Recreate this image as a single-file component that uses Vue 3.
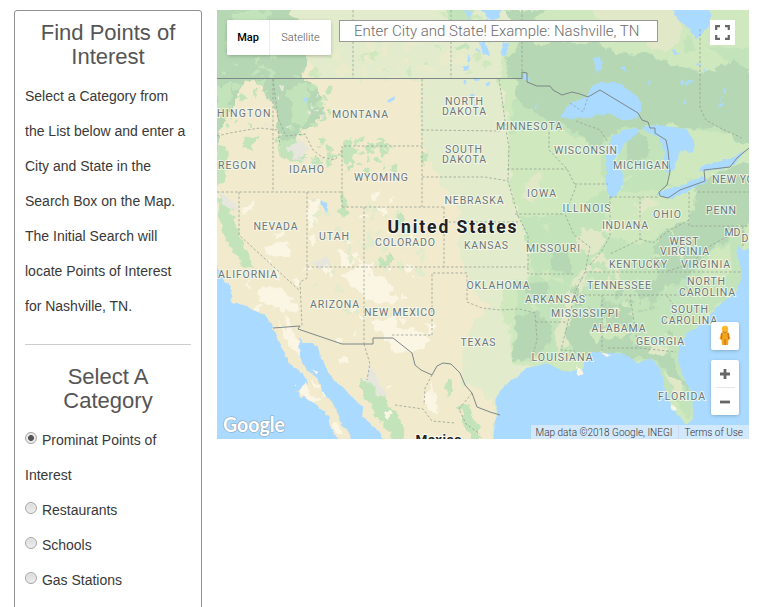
<script setup>
import { ref } from 'vue'

const selected = ref(0)
const categories = ['Prominat Points of Interest', 'Restaurants', 'Schools', 'Gas Stations']

// [label, centre x, baseline y, width]
const labels = [
  ['MONTANA', 360, 118, 55], ['NORTH', 464, 104.5, 37], ['DAKOTA', 464, 115, 43],
  ['MINNESOTA', 529, 130, 65], ['SOUTH', 463.5, 153, 36], ['DAKOTA', 464, 163, 43],
  ['WISCONSIN', 585.5, 153.5, 62], ['MICHIGAN', 641, 169, 55], ['IDAHO', 306.5, 173, 34],
  ['WYOMING', 381, 181, 53], ['NEBRASKA', 474, 204, 58], ['IOWA', 541.5, 197, 28],
  ['ILLINOIS', 586.5, 212, 47], ['OHIO', 667, 218, 27], ['PENN', 721, 214, 29],
  ['NEVADA', 275.5, 230, 43], ['UTAH', 334, 240, 29], ['COLORADO', 405, 246, 59],
  ['KANSAS', 486, 249, 43], ['MISSOURI', 553, 252, 53], ['INDIANA', 625, 229, 45],
  ['WEST', 684, 245, 28], ['VIRGINIA', 684.5, 255, 48], ['KENTUCKY', 638, 268, 57],
  ['VIRGINIA', 705.5, 268, 48], ['TENNESSEE', 619, 289, 63], ['NORTH', 706, 285, 37],
  ['CAROLINA', 707, 295.5, 55], ['OKLAHOMA', 498, 289, 62], ['ARIZONA', 334.5, 308, 48],
  ['NEW MEXICO', 399.5, 316, 70], ['ARKANSAS', 555, 303, 59], ['MISSISSIPPI', 584.5, 317, 66],
  ['ALABAMA', 618.5, 332, 53], ['SOUTH', 689.5, 313, 36], ['CAROLINA', 689, 323.5, 55],
  ['GEORGIA', 660, 345, 47], ['TEXAS', 478, 346, 34], ['LOUISIANA', 562, 361, 60],
  ['FLORIDA', 681.5, 400, 46], ['MD', 732.5, 236, 15]
]

const states = [
  'M217 136L230 133L247 130L260 128L278 130L280 145',
  'M273 79V192', 'M217 192H342', 'M342 207V146H422', 'M422 79V207', 'M342 207H444',
  'M273 79L278 118L286 136L305 134L313 150L322 157L335 160L342 150',
  'M239 192V235L300 291', 'M307 192V278L300 282L302 326', 'M307 267H528', 'M364 207V344',
  'M444 207V267', 'M444 222H518', 'M422 130L500 131', 'M499 79L503 105L506 130L509 147L508 181',
  'M422 177H485L508 181L518 216', 'M507 169H567', 'M515 214H564', 'M518 216L528 235V274H575',
  'M432 335V273H467V302L482 308L500 310L519 309L535 313L537 340L531 362', 'M392 335H432',
  'M536 322H568', 'M549 132V150L567 169L576 187L565 214L574 235L590 247L585 272L576 290L568 322L561 350L575 351',
  'M575 184H608', 'M610 197V236L601 252L589 266', 'M610 197H659', 'M640 197V239L627 246L610 254',
  'M689 192V226H749', 'M698 192H749', 'M640 239L653 243L667 232L689 220', 'M585 272H742',
  'M575 295H690', 'M602 295V350', 'M630 295L638 348', 'M608 348H640L676 352', 'M667 296L684 320',
  'M668 271L690 264L710 246L730 235', 'M743 226V246', 'M353 10V78', 'M451 10V78', 'M522 10V72',
  'M700 29V108L706 120L718 127L742 138', 'M576 121L600 130L608 142', 'M570 103L583 112L588 97',
  'M364 344L370 364L367 380', 'M432 375L425 388L424 405', 'M395 405L423 409L432 421L455 423',
  'M472 393L459 409L466 424L480 434'
]

// deterministic scatter of small terrain patches
function scatter(seed, count, x0, y0, w, h, max) {
  let s = seed
  const next = () => (s = (s * 16807) % 2147483647) / 2147483647
  return Array.from({ length: count }, () => {
    const x = x0 + next() * w
    const y = y0 + next() * h
    const a = 2 + next() * max
    const b = 2 + next() * max
    return `M${x.toFixed(1)} ${y.toFixed(1)}l${a.toFixed(1)} ${(-b / 2).toFixed(1)}l${(a / 2).toFixed(1)} ${b.toFixed(1)}l${(-a).toFixed(1)} ${(b / 2).toFixed(1)}z`
  }).join('')
}
const patches = [
  { d: scatter(31, 36, 240, 200, 180, 130, 6), c: 'sand' },
  { d: scatter(77, 20, 290, 320, 140, 110, 7), c: 'sand' },
  { d: scatter(19, 34, 290, 85, 40, 80, 5), c: 'leaf' },
  { d: scatter(53, 22, 368, 205, 55, 70, 5), c: 'plain' },
  { d: scatter(59, 22, 310, 195, 60, 120, 5), c: 'plain' },
  { d: scatter(37, 26, 345, 135, 45, 35, 4), c: 'leaf' },
  { d: scatter(91, 22, 310, 14, 200, 60, 6), c: 'soft' },
  { d: scatter(11, 20, 310, 40, 150, 35, 10), c: 'pale' },
  { d: scatter(47, 34, 570, 275, 125, 75, 8), c: 'forest' },
  { d: scatter(67, 38, 530, 150, 150, 190, 7), c: 'soft' },
  { d: scatter(83, 12, 575, 230, 40, 50, 7), c: 'tan' },
  { d: scatter(5, 12, 460, 15, 65, 100, 2), c: 'water' },
  { d: scatter(7, 12, 535, 50, 200, 60, 2), c: 'water' },
  { d: scatter(29, 30, 218, 40, 80, 90, 4), c: 'leaf' },
  { d: scatter(43, 9, 265, 85, 55, 60, 2), c: 'urban' }
]
</script>

<template>
  <main class="page">
    <aside class="panel">
      <h2>Find Points of Interest</h2>
      <p>Select a Category from the List below and enter a City and State in the Search Box on the Map. The Initial Search will locate Points of Interest for Nashville, TN.</p>
      <hr />
      <h2>Select A Category</h2>
      <label v-for="(name, i) in categories" :key="name" @click="selected = i">
        <span class="radio" :class="{ on: selected === i }"></span> {{ name }}
      </label>
    </aside>

    <section class="map">
      <svg class="canvas" width="532" height="429" viewBox="217 10 532 429">
        <defs>
          <filter id="rough" x="-2%" y="-2%" width="104%" height="104%" color-interpolation-filters="sRGB">
            <feTurbulence type="fractalNoise" baseFrequency="0.1" numOctaves="3" seed="4" />
            <feDisplacementMap in="SourceGraphic" scale="12" xChannelSelector="R" yChannelSelector="G" />
          </filter>
          <filter id="coast" x="-2%" y="-2%" width="104%" height="104%" color-interpolation-filters="sRGB">
            <feTurbulence type="fractalNoise" baseFrequency="0.18" numOctaves="2" seed="8" />
            <feDisplacementMap in="SourceGraphic" scale="4" xChannelSelector="R" yChannelSelector="G" />
          </filter>
        </defs>
        <rect class="base" x="217" y="10" width="532" height="429" />
        <g filter="url(#rough)">
          <path class="plain" d="M290 0H770V460H490L497 412L482 388L462 385L464 350L474 320L490 306L474 293L462 262L456 220L462 200L440 184L428 160L420 135L421 79H318L306 55z" />
          <path class="soft" d="M499 78L507 120L509 165L512 200L518 214L528 240L528 275L505 290L500 308L510 330L512 363L540 370L600 380L700 440L770 300V0H522V30L508 40z" />
          <path class="leaf" d="M509 135L545 125L600 145L606 190L565 215L520 215L535 275L515 285L516 360H640L690 420L696 390L680 345L745 280V225L690 220L640 245L608 235L608 197L660 190L690 180V150L675 140L655 125L700 130L760 140V100H512zM445 5L473 8L474 29L456 26L446 18zM455 44L470 47L464 51L457 50z" />
          <path class="tan" d="M590 5H680L684 30L675 50L655 50L645 40L612 40zM524 184L532 178L541 174L540 188L530 202L522 196zM576 236L592 228L605 234L603 246L590 258L580 249zM634 204L645 198L658 200L645 212L632 217zM574 278L588 264L584 286L572 305L566 346L557 352L556 335z" />
          <path class="soft" d="M680 5H770V80L745 60L720 70L698 73L688 58z" />
          <path class="leaf" d="M685 45L690 36L696 50L684 54zM705 45L760 50V70L726 60z" />
          <path class="forest" d="M522 42L560 42L608 46L614 54L645 55L665 62L688 67L702 74L718 66L735 60L762 78V140L742 145L720 128L690 128L655 124L640 130L622 128L608 137L600 148L588 145L580 132L550 124L541 116L530 108L519 100L516 82L508 76L507 58zM503 10H545L534 22L520 28z" />
          <path class="forest" d="M626 138L640 134L648 140L650 154L638 163L625 158zM696 182L712 176L745 162H762V218L740 226L732 236L712 250L694 266L680 281L655 297L641 301L637 291L660 276L650 264L656 244L666 228L690 222zM514 318L536 310L552 326L550 345L535 358L513 360zM563 326L600 306L631 300L633 330L628 352L604 356L569 345zM551 256L566 252L574 267L569 275L551 269zM523 283L548 284L550 296L526 294zM625 345L650 350L672 353L680 376L692 394L685 388L660 365L645 358L622 358z" />
          <path class="soft" d="M672 148L695 147L710 154L703 166L692 170L687 183L667 184L672 170zM712 252L730 243L732 275L700 285zM590 330L620 322L628 336L596 342z" />
          <path class="tan" d="M638 342L668 347L665 356L645 350zM664 372L680 380L687 398L675 398z" />
          <path class="forest" d="M205 0H284L298 20L306 52L304 80L316 88L322 104L318 126L300 130L293 145L282 147L276 128L280 104L266 90L254 80L242 82L232 112L220 128L215 164H205z" />
          <path class="leaf" d="M230 12L272 10L267 20L240 24zM216 88L232 82L230 105L219 120zM288 92L306 82L310 113L300 132L294 120z" />
          <path class="base" d="M244 82L262 88L280 110L273 137L256 132L233 134L235 116L231 106L243 103z" />
          <path class="forest" d="M262 80H286V128L278 122L274 105L262 90z" />
          <path class="leaf" d="M217 196L230 207L236 225L247 250L254 266L245 268L231 246L221 230zM217 145L227 145L225 180L217 186zM276 140L293 140L307 154L299 164L281 158zM342 145L355 140L352 158L343 165zM379 146L386 150L385 158L381 158zM343 194L348 205L344 218L339 210zM395 212L402 210L405 222L395 227zM377 260L390 255L393 263L379 266zM245 137L259 139L253 151L243 147zM421 158L428 155L428 163L422 164z" />
          <path class="leaf" d="M360 375L371 382L383 398L398 414L407 442H394L378 418L362 390zM447 379L453 379L453 390L446 397zM458 406L469 403L475 422L484 439H470z" />
          <path class="urban" d="M286 145H304L303 162L291 158zM219 192L234 202L238 212L222 204zM294 138L310 145L306 152zM367 364L378 378L387 398L376 392L367 380zM310 263L326 258L331 265L320 270z" />
          <path class="sand" d="M308 200L320 199L319 214L314 229L309 230L308 212zM336 248L360 256L353 266L342 263zM351 270L370 265L384 279L397 298L394 306L373 302L356 290L342 277zM258 288L280 287L300 310L286 311L260 303zM263 249L277 242L292 250L290 258L280 255zM372 323L395 315L395 328L410 328L431 340L424 348L398 353L382 335zM277 320L300 342L300 360L289 343zM247 204L254 200L248 213L240 216zM368 194L380 190L377 199zM424 397L432 390L438 412L428 412z" />
        </g>
        <g filter="url(#rough)"><path v-for="(p, i) in patches" :key="i" :class="p.c" :d="p.d" /></g>
        <g class="water" filter="url(#coast)">
          <path d="M210 262L217 265L223 278L230 287L232 302L243 305L253 310L265 315L272 325L277 338L282 348L290 365L302 373L308 382L306 390L297 391L302 397L307 398L317 405L328 415L330 427L338 439V450H205z" />
          <path d="M299 337L302 343L313 343L318 348L322 360L327 370L335 382L343 387L350 395L357 402L363 407L362 417L370 423L380 433L385 445H353L348 430L343 427L338 413L332 402L322 390L317 378L307 370L300 357z" />
          <path d="M493 445L495 418L498 413L495 405L500 390L508 382L518 377L525 368L533 367L547 363L557 368L570 372L583 370L585 362L590 353L603 353L620 353L630 357L638 364L650 358L660 368L663 378L665 390L670 403L678 415L685 424L691 422L693 410L692 393L683 377L678 360L679 347L687 333L700 325L710 315L717 307L728 298L737 291L741 280L741 268L738 258L737 245L744 251L755 246V450z" />
          <path d="M560 117L570 103L587 97L590 88L600 82L620 83L625 88L638 97L642 108L638 117L625 121L607 113L590 117L570 119z" />
          <path d="M608 147L612 137L623 130L637 128L638 133L625 143L620 152L613 161L622 168L623 182L617 195L610 198L605 182L607 165L605 145z" />
          <path d="M642 127L658 125L673 127L687 130L695 143L693 152L680 151L677 160L673 170L667 173L663 165L665 152L658 137L647 132z" />
          <path d="M657 195L662 190L677 187L692 180L705 177L707 182L693 188L680 195L670 199zM698 170L703 165L717 162L733 158L746 149L735 163L727 168L707 171z" />
          <path d="M673 8L678 20L688 28L695 39L703 33L708 27L712 17L708 8zM593 59L601 56L602 68L597 73zM479 8H500L500 18L491 20zM480 43L487 45L490 56L483 55zM503 41L509 44L505 56L501 54zM465 10L472 12L469 20zM303 98L308 97L308 101L304 102zM321 200L328 206L327 213L320 203zM523 73L529 77L529 80L523 80zM388 100L395 96L394 100L387 103z" />
        </g>
        <path class="sand" filter="url(#coast)" d="M312 368L318 372L316 375zM294 384L296 385L294 387zM285 315L289 318L292 330L298 343V353L292 344L287 330zM306 382L310 395L323 401L311 401L299 392zM576 366L584 373L578 376zM671 404L677 410L673 412zM600 352L611 355L607 357z" />
        <g class="state"><path v-for="d in states" :key="d" :d="d" /></g>
        <path class="border" d="M217 78.5H522V72L527 73V82L537 86L550 86L553 90L562 95L572 92L580 94L588 97L600 90L638 113L642 120L648 122L650 128H655V133L666 140L668 150L670 172L667 185L659 192L660 196L668 198L680 190L705 181L704 170L730 167L737 158L749 148" />
        <path class="border" d="M273 328L300 326L298 329L342 344H373V338H393L412 353L415 365L421 370L432 375L437 366L443 363L451 364L460 373L465 385L472 393L477 407L490 412L500 415" />
        <g class="names">
          <text v-for="([name, x, y, w], i) in labels" :key="i" :x="x" :y="y" :textLength="w + 1">{{ name }}</text>
          <text class="start" x="209.500" y="117" textLength="61">SHINGTON</text>
          <text class="start" x="218" y="169" textLength="38">REGON</text>
          <text class="start" x="218" y="278" textLength="59">ALIFORNIA</text>
          <text class="start" x="712" y="183" textLength="56">NEW YORK</text>
          <text class="start" x="741.500" y="242">DE</text>
        </g>
        <text class="country" x="452" y="232.500" textLength="129">United States</text>
        <text class="mexico" x="438.500" y="443.500" textLength="46">Mexico</text>
        <text class="logo" x="254" y="432" textLength="62" lengthAdjust="spacingAndGlyphs">Google</text>
      </svg>

      <div class="types"><button class="active">Map</button><button>Satellite</button></div>
      <input class="search" type="text" placeholder="Enter City and State! Example: Nashville, TN" />
      <button class="control full">
        <svg width="15" height="15" viewBox="0 0 15 15"><path d="M1.200 5V1.200H5M10 1.200H13.800V5M13.800 10V13.800H10M5 13.800H1.200V10" /></svg>
      </button>
      <button class="control pegman">
        <svg width="14" height="22" viewBox="0 0 14 22">
          <path d="M3 8Q7 5 11 8L12.500 14L10.500 15L10 20H4L3.500 15L1.500 14z" fill="#f2a51d" />
          <path d="M4 8L3.500 14M10 8L10.500 14M7 14V20" stroke="#b96f12" stroke-width="1" />
          <circle cx="7" cy="4" r="3.200" fill="#fbb829" />
          <path d="M4.500 6.500Q7 8.500 9.500 6.500" fill="none" stroke="#cc7b17" />
        </svg>
      </button>
      <div class="control zoom">
        <button><svg width="12" height="12" viewBox="0 0 12 12"><path d="M1 6H11M6 1V11" /></svg></button>
        <button><svg width="12" height="12" viewBox="0 0 12 12"><path d="M1 6H11" /></svg></button>
      </div>
      <footer class="credits"><span>Map data ©2018 Google, INEGI</span><span>Terms of Use</span></footer>
    </section>
  </main>
</template>

<style>
body { overflow: hidden; background: #fff; }
</style>

<style scoped>
.page { display: flex; gap: 15px; height: 607px; padding: 10px 0 0 14px; box-sizing: border-box; overflow: hidden; font-family: "Liberation Sans", Arial, sans-serif; }
.panel { width: 188px; height: 650px; flex: none; box-sizing: border-box; padding: 10px; border: 1px solid #919191; border-radius: 3px; color: #393939; font-size: 14px; line-height: 35px; }
h2 { margin: 0; font-size: 22px; line-height: 24px; font-weight: 400; text-align: center; color: #555; }
p { margin: 10px 0 20px; }
hr { height: 1px; margin: 0 0 20px; border: 0; background: #ccc; }
h2 + label { margin-top: 10px; }
label { display: block; }
.radio { display: inline-block; width: 12px; height: 12px; margin-right: 1px; vertical-align: 1px; box-sizing: border-box; border: 1px solid #a5a5a5; border-radius: 50%; background: linear-gradient(#dadada, #eee); box-shadow: inset 0 0 0 1px #ededed; }
.radio.on { background: radial-gradient(circle, #555 0 2.600px, #e9e9e9 3.300px); }
.map { position: relative; width: 532px; height: 429px; flex: none; overflow: hidden; font-family: Roboto, sans-serif; }
.canvas { display: block; }
.base { fill: #f1eacd; }
.pale { fill: #eaebca; }
.plain { fill: #e2ebcb; }
.soft { fill: #cfe8be; }
.leaf { fill: #c3e4ba; }
.forest { fill: #b5d7b3; }
.tan { fill: #e1e8c8; }
.sand { fill: #fbf5e4; }
.urban { fill: #e6e6dd; }
.water { fill: #aadaff; }
.state { fill: none; stroke: #98a294; stroke-width: .8; stroke-dasharray: 2.500 2; }
.border { fill: none; stroke: #7d8888; stroke-width: 1; }
.names { font-size: 10.500px; fill: #6b777c; stroke: #f7faed; stroke-opacity: .8; stroke-width: 2px; paint-order: stroke; text-anchor: middle; }
.names .start { text-anchor: start; }
.country, .mexico { font-size: 17.500px; font-weight: 700; fill: #202124; stroke: #fff; stroke-opacity: .7; stroke-width: 2px; paint-order: stroke; text-anchor: middle; }
.mexico { font-size: 13.500px; }
.logo { font: 700 20px Lato, sans-serif; fill: #fff; stroke: #8aa5b8; stroke-width: 1.200px; paint-order: stroke; text-anchor: middle; }
button { padding: 0; border: 0; background: #fff; font-family: inherit; }
.types { position: absolute; left: 10px; top: 10px; display: flex; height: 35px; border-radius: 2px; background: #fff; box-shadow: 0 1px 4px -1px #0005; overflow: hidden; }
.types button { width: 61px; font-size: 11px; font-weight: 300; color: #555; }
.types .active { width: 43px; border-right: 1px solid #eee; color: #000; font-weight: 500; }
.search { position: absolute; left: 122px; top: 10px; width: 319px; height: 22px; box-sizing: border-box; padding: 0 13px 0 14px; border: 1px solid #999; border-radius: 0; background: #fff; font: 300 15px Roboto, sans-serif; }
.search::placeholder { color: #6c6c6c; opacity: 1; }
.control { position: absolute; display: flex; align-items: center; justify-content: center; border-radius: 2px; background: #fff; box-shadow: 0 1px 4px -1px #0005; }
.full { left: 493px; top: 10px; width: 25px; height: 25px; border-radius: 0; box-shadow: none; }
.full path { fill: none; stroke: #666; stroke-width: 2.200; }
.pegman { left: 494px; top: 312px; width: 28px; height: 28px; }
.zoom { left: 494px; top: 350px; width: 28px; height: 55px; flex-direction: column; }
.zoom button { display: flex; flex: 1; align-items: center; justify-content: center; width: 19px; background: transparent; }
.zoom button + button { border-top: 1px solid #e6e6e6; }
.zoom path { stroke: #666; stroke-width: 2.800; }
.credits { position: absolute; right: 0; bottom: 0; display: flex; height: 14px; line-height: 15px; font-size: 10px; font-weight: 300; color: #333; background: #e6effaaa; white-space: nowrap; }
.credits span { padding: 0 6px 0 5px; }
.credits span + span { border-left: 1px solid #ccd9e8; }
</style>
